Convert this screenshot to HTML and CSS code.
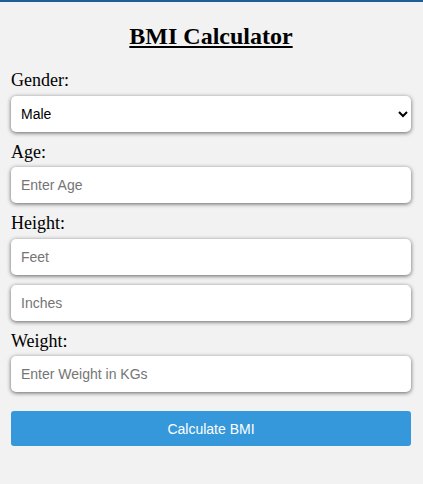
FILE: index.html
```html
<!DOCTYPE html>
<html>
<head>
<meta charset="utf-8">
<link rel="stylesheet" href="styles.css">
</head>
<body>
<div class="topbar"></div>
<div class="container">
  <h1 class="title">BMI Calculator</h1>
  <label class="label" for="gender">Gender:</label>
  <select class="field select" id="gender">
    <option>Male</option>
    <option>Female</option>
  </select>
  <label class="label" for="age">Age:</label>
  <input class="field" id="age" type="text" placeholder="Enter Age">
  <label class="label" for="feet">Height:</label>
  <input class="field" id="feet" type="text" placeholder="Feet">
  <input class="field" id="inches" type="text" placeholder="Inches">
  <label class="label" for="weight">Weight:</label>
  <input class="field" id="weight" type="text" placeholder="Enter Weight in KGs">
  <button class="btn" type="button">Calculate BMI</button>
</div>
</body>
</html>
```
FILE: styles.css
```css
html, body {
  margin: 0;
  padding: 0;
  background: #f2f2f2;
  font-family: "Liberation Serif", "Times New Roman", serif;
}
.topbar {
  height: 2px;
  background: #1f5f95;
}
.container {
  padding: 0 12px 0 11px;
  display: flex;
  flex-direction: column;
}
.title {
  font-size: 24px;
  font-weight: bold;
  text-decoration: underline;
  text-align: center;
  margin: 21px 0 20px;
}
.label {
  font-size: 18px;
  line-height: 20.5px;
  margin-bottom: 5px;
}
.field {
  box-sizing: border-box;
  height: 36px;
  padding: 0 10px;
  border: none;
  border-radius: 5px;
  background: #fff;
  box-shadow: 0 1px 4px rgba(0, 0, 0, 0.6);
  font-family: "Liberation Sans", Arial, sans-serif;
  font-size: 14px;
  color: #000;
  margin-bottom: 10px;
  outline: none;
}
.field::placeholder {
  color: #757575;
}
.select {
  padding-left: 6px;
}
.btn {
  margin-top: 9px;
  height: 35px;
  border: none;
  border-radius: 3px;
  background: #3498db;
  color: #fff;
  font-family: "Liberation Sans", Arial, sans-serif;
  font-size: 14px;
  cursor: pointer;
}
```
